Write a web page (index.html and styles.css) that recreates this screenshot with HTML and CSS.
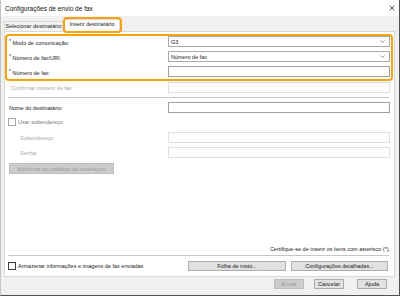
FILE: index.html
```html
<!DOCTYPE html>
<html lang="pt">
<head>
<meta charset="utf-8">
<title>Configurações de envio de fax</title>
<link rel="stylesheet" href="styles.css">
</head>
<body>
<div class="window">
  <div class="titlebar">
    <span class="title">Configurações de envio de fax</span>
    <svg class="close" width="6" height="6" viewBox="0 0 6 6"><path d="M0.5 0.5L5.5 5.5M5.5 0.5L0.5 5.5" stroke="#222" stroke-width="0.8" fill="none"/></svg>
  </div>
  <div class="tabs">
    <div class="tab">Selecionar destinatário</div>
    <div class="tab active">Inserir destinatário</div>
  </div>
  <div class="panel">
    <div class="grp">
      <div class="row"><span class="lbl"><span class="ast">*</span>Modo de comunicação:</span><div class="field select"><span>G3</span><svg class="chev" width="5" height="3" viewBox="0 0 5 3"><path d="M0.5 0.5L2.5 2.5L4.5 0.5" stroke="#666" stroke-width="0.7" fill="none"/></svg></div></div>
      <div class="row"><span class="lbl"><span class="ast">*</span>Número de fax/URI:</span><div class="field select"><span>Número de fax</span><svg class="chev" width="5" height="3" viewBox="0 0 5 3"><path d="M0.5 0.5L2.5 2.5L4.5 0.5" stroke="#666" stroke-width="0.7" fill="none"/></svg></div></div>
      <div class="row"><span class="lbl"><span class="ast">*</span>Número de fax:</span><div class="field input"></div></div>
    </div>
    <div class="row r4"><span class="lbl dim ind1">Confirmar número de fax:</span><div class="field input off"></div></div>
    <div class="sep s1"></div>
    <div class="row r5"><span class="lbl">Nome do destinatário:</span><div class="field input"></div></div>
    <div class="check r6"><span class="box soft"></span><span class="soft-t">Usar subendereço</span></div>
    <div class="row r7"><span class="lbl dim ind2">Subendereço:</span><div class="field input off"></div></div>
    <div class="row r8"><span class="lbl dim ind2">Senha:</span><div class="field input off"></div></div>
    <div class="btnrow"><button class="btn dis wide">Adicionar ao catálogo de endereços</button></div>
    <div class="spacer"></div>
    <div class="note">Certifique-se de inserir os itens com asterisco (*).</div>
    <div class="sep s2"></div>
    <div class="bottom">
      <div class="check"><span class="box"></span><span>Armazenar informações e imagens de fax enviadas</span></div>
      <div class="bbtns">
        <button class="btn b1">Folha de rosto...</button>
        <button class="btn b2">Configurações detalhadas...</button>
      </div>
    </div>
  </div>
  <div class="footer">
    <button class="btn fb dis">Enviar</button>
    <button class="btn fb">Cancelar</button>
    <button class="btn fb last">Ajuda</button>
  </div>
</div>
</body>
</html>
```

FILE: styles.css
```css
* { box-sizing: border-box; }
html, body { margin: 0; padding: 0; background: #ffffff; }
body {
  font-family: "Liberation Sans", Arial, sans-serif;
  font-size: 5.5px;
  color: #1a1a1a;
}
.window {
  width: 400px;
  height: 296px;
  background: #f0f0f0;
  border-left: 1px solid #c4c4c4;
  border-right: 1px solid #505050;
  border-bottom: 1px solid #505050;
  display: flex;
  flex-direction: column;
}
.titlebar {
  flex: none;
  height: 16px;
  background: #ffffff;
  display: flex;
  align-items: center;
  justify-content: space-between;
  padding: 0 4px;
}
.title { font-size: 6.5px; color: #111; }
.close { display: block; }

.tabs {
  flex: none;
  height: 16px;
  margin-bottom: -1px;
  padding-left: 3px;
  display: flex;
  align-items: flex-end;
  position: relative;
  z-index: 2;
}
.tab {
  width: 59px;
  height: 10px;
  margin-bottom: 1px;
  border: 1px solid #d9d9d9;
  border-bottom: none;
  background: #f4f4f4;
  text-align: center;
  line-height: 8px;
  white-space: nowrap;
  overflow: hidden;
}
.tab.active {
  position: relative;
  overflow: visible;
  width: 57px;
  height: 13px;
  margin-bottom: 0;
  background: #ffffff;
  line-height: 9px;
  padding-left: 1px;
}
.tab.active::after {
  content: "";
  position: absolute;
  left: -1px;
  top: -3px;
  right: -3px;
  bottom: -1px;
  border: 2px solid #f5a40f;
  border-radius: 4px;
}

.panel {
  flex: none;
  height: 246px;
  margin: 0 4px 0 3px;
  border: 1px solid #d9d9d9;
  background: #ffffff;
  display: flex;
  flex-direction: column;
  padding: 2px 0 5px 0;
}
.grp {
  margin-right: 1px;
  border: 2px solid #f5a40f;
  border-radius: 4px;
  padding: 0 1px 2px 2px;
  display: flex;
  flex-direction: column;
  gap: 4px;
}
.row {
  display: flex;
  align-items: center;
  height: 11px;
  padding: 0 4px 0 4px;
}
.grp .row { padding: 0; }
.lbl { flex: 1; white-space: nowrap; }
.ast { font-size: 5px; vertical-align: 1.5px; margin-right: 1.5px; }
.dim { color: #a6a6a6; }
.ind1 { padding-left: 2px; }
.ind2 { padding-left: 11px; }
.field {
  flex: none;
  width: 222px;
  height: 11px;
  background: #ffffff;
  border: 1px solid #a9a9a9;
  display: flex;
  align-items: center;
  justify-content: space-between;
  padding: 0 4px 0 2px;
}
.field.input { border-color: #a0a0a0; }
.field.off { border-color: #dedede; }
.chev { display: block; }

.r4 { margin-top: 1px; }
.sep {
  height: 1px;
  background: #c6c6c6;
  margin: 0 5px 0 3px;
}
.s1 { margin-top: 4px; }
.r5 { margin-top: 4px; }
.check {
  display: flex;
  align-items: center;
  gap: 2px;
  white-space: nowrap;
}
.r6 { margin-top: 5px; height: 8px; padding-left: 3px; }
.box {
  display: block;
  width: 8px;
  height: 8px;
  border: 1px solid #3c3c3c;
  background: #ffffff;
}
.box.soft { border-color: #a8a8a8; }
.soft-t { color: #7a7a7a; }
.r7 { margin-top: 6px; }
.r8 { margin-top: 4px; }

.btn {
  font-family: inherit;
  font-size: 5.5px;
  color: #1a1a1a;
  background: #e1e1e1;
  border: 1px solid #adadad;
  height: 10px;
  padding: 0;
  margin: 0;
  line-height: 8px;
  white-space: nowrap;
}
.btn.dis {
  background: #cccccc;
  border-color: #bfbfbf;
  color: #9a9a9a;
}
.btnrow { margin-top: 5px; padding-left: 4px; display: flex; }
.btn.wide { width: 105px; height: 11px; }

.spacer { flex: 1; }
.note {
  text-align: right;
  padding-right: 4px;
  height: 7px;
  line-height: 7px;
  white-space: nowrap;
}
.s2 { margin-top: 2px; }
.bottom {
  margin-top: 5px;
  height: 10px;
  display: flex;
  align-items: center;
  justify-content: space-between;
  padding: 0 6px 0 3px;
}
.bbtns { display: flex; gap: 5px; }
.b1 { width: 98px; }
.b2 { width: 97px; }

.footer {
  flex: none;
  margin-top: 2px;
  display: flex;
  justify-content: flex-end;
  gap: 10px;
  padding-right: 12px;
}
.fb { width: 30px; }
.fb.last { margin-left: 3px; }
```
